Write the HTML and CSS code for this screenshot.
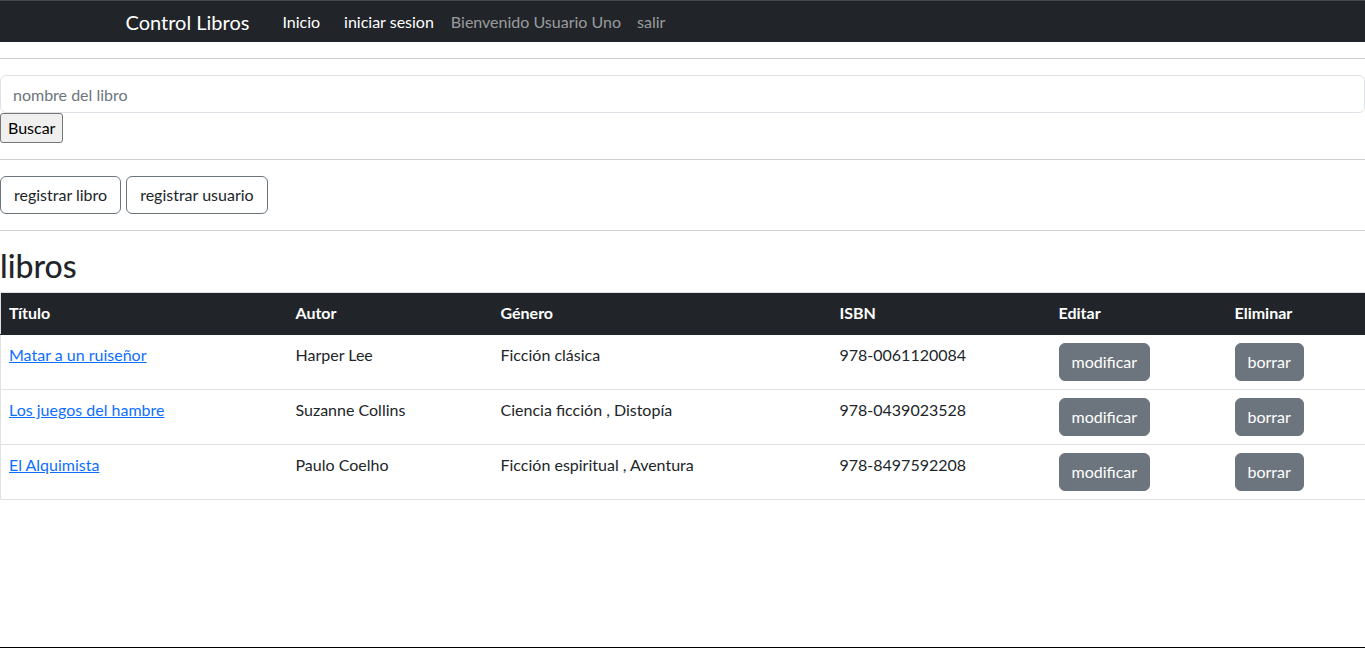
FILE: index.html
```html
<!DOCTYPE html>
<html lang="es">
<head>
<meta charset="utf-8">
<title>Control Libros</title>
<link rel="stylesheet" href="styles.css">
</head>
<body>
<nav class="navbar">
  <div class="nav-container">
    <a class="brand" href="#">Control Libros</a>
    <ul class="nav">
      <li><a class="nav-link active first" href="#">Inicio</a></li>
      <li><a class="nav-link active second" href="#">iniciar sesion</a></li>
      <li><span class="nav-text">Bienvenido Usuario Uno</span></li>
      <li><a class="nav-link muted" href="#">salir</a></li>
    </ul>
  </div>
</nav>
<hr class="sep">
<form class="search">
  <input class="form-control" type="text" placeholder="nombre del libro">
  <button class="plain-btn" type="button">Buscar</button>
</form>
<hr class="sep">
<div class="actions">
  <a class="btn btn-outline" href="#">registrar libro</a>
  <a class="btn btn-outline" href="#">registrar usuario</a>
</div>
<hr class="sep">
<h2 class="title">libros</h2>
<table class="books">
  <colgroup>
    <col class="c1"><col class="c2"><col class="c3"><col class="c4"><col class="c5"><col class="c6">
  </colgroup>
  <thead>
    <tr><th>Título</th><th>Autor</th><th>Género</th><th>ISBN</th><th>Editar</th><th>Eliminar</th></tr>
  </thead>
  <tbody>
    <tr>
      <td><a href="#">Matar a un ruiseñor</a></td>
      <td>Harper Lee</td>
      <td>Ficción clásica</td>
      <td>978-0061120084</td>
      <td><a class="btn btn-secondary" href="#">modificar</a></td>
      <td><a class="btn btn-secondary" href="#">borrar</a></td>
    </tr>
    <tr>
      <td><a href="#">Los juegos del hambre</a></td>
      <td>Suzanne Collins</td>
      <td>Ciencia ficción , Distopía</td>
      <td>978-0439023528</td>
      <td><a class="btn btn-secondary" href="#">modificar</a></td>
      <td><a class="btn btn-secondary" href="#">borrar</a></td>
    </tr>
    <tr>
      <td><a href="#">El Alquimista</a></td>
      <td>Paulo Coelho</td>
      <td>Ficción espiritual , Aventura</td>
      <td>978-8497592208</td>
      <td><a class="btn btn-secondary" href="#">modificar</a></td>
      <td><a class="btn btn-secondary" href="#">borrar</a></td>
    </tr>
  </tbody>
</table>
</body>
</html>
```

FILE: styles.css
```css
* { box-sizing: border-box; }

html, body { height: 100%; }

body {
  margin: 0;
  min-height: 100vh;
  font-family: Lato, "Open Sans", sans-serif;
  font-size: 16px;
  line-height: 24px;
  color: #212529;
  background: #fff;
  border-bottom: 1px solid #000;
}

.navbar {
  background: #212529;
  border-top: 1px solid #45494d;
  height: 42px;
}

.nav-container {
  max-width: 1140px;
  margin: 0 auto;
  padding: 0 12px;
  display: flex;
  align-items: center;
  height: 41px;
}

.brand {
  color: #fff;
  text-decoration: none;
  font-size: 20px;
  line-height: 30px;
  margin-right: 24px;
  padding: 5px 0 5px 1px;
}

.nav {
  list-style: none;
  margin: 0;
  padding: 0;
  display: flex;
  align-items: center;
}

.nav-link, .nav-text {
  display: block;
  padding: 8px 8px;
  line-height: 24px;
  text-decoration: none;
  color: rgba(255, 255, 255, 0.55);
}

.nav-link.active { color: #fff; }
.nav-link.first { padding: 8px 12px 8px 9px; }
.nav-link.second { padding: 8px 9px 8px 12px; }

.sep {
  margin: 16px 0;
  border: 0;
  border-top: 1px solid #cfcfcf;
  height: 0;
}

.search { display: block; }

.form-control {
  display: block;
  width: 100%;
  height: 38px;
  padding: 6px 12px;
  font: inherit;
  color: #212529;
  border: 1px solid #dee2e6;
  border-radius: 6px;
  background: #fff;
}

.form-control::placeholder { color: #6c757d; opacity: 1; }

.plain-btn {
  display: block;
  font: inherit;
  line-height: 25px;
  padding: 1px 7px 2px;
  color: #000;
  background: #efefef;
  border: 1px solid #767676;
  border-radius: 3px;
}

.actions {
  display: flex;
  gap: 5px;
}

.btn {
  display: inline-block;
  padding: 6px 13px;
  font-size: 16px;
  line-height: 24px;
  border: 1px solid transparent;
  border-radius: 6px;
  text-decoration: none;
  text-align: center;
}

.btn-outline {
  color: #212529;
  border-color: #6c757d;
}

.btn-secondary {
  color: #fff;
  background: #6c757d;
  border-color: #6c757d;
  padding: 6px 12px;
}

.title {
  margin: 0 0 8px;
  font-size: 32px;
  font-weight: 500;
  line-height: 37px;
}

.books {
  width: 100%;
  border-collapse: collapse;
  table-layout: fixed;
  border: 1px solid #dee2e6;
}

.c1 { width: 287px; }
.c2 { width: 205px; }
.c3 { width: 339px; }
.c4 { width: 219px; }
.c5 { width: 176px; }
.c6 { width: 139px; }

.books th,
.books td {
  padding: 8px;
  text-align: left;
  vertical-align: top;
  border-bottom: 1px solid #dee2e6;
}

.books thead th {
  padding: 8px 8px 9px;
  background: #212529;
  color: #fff;
  font-weight: 700;
  border-color: #212529;
}

.books td a:not(.btn) { color: #0d6efd; }
```
